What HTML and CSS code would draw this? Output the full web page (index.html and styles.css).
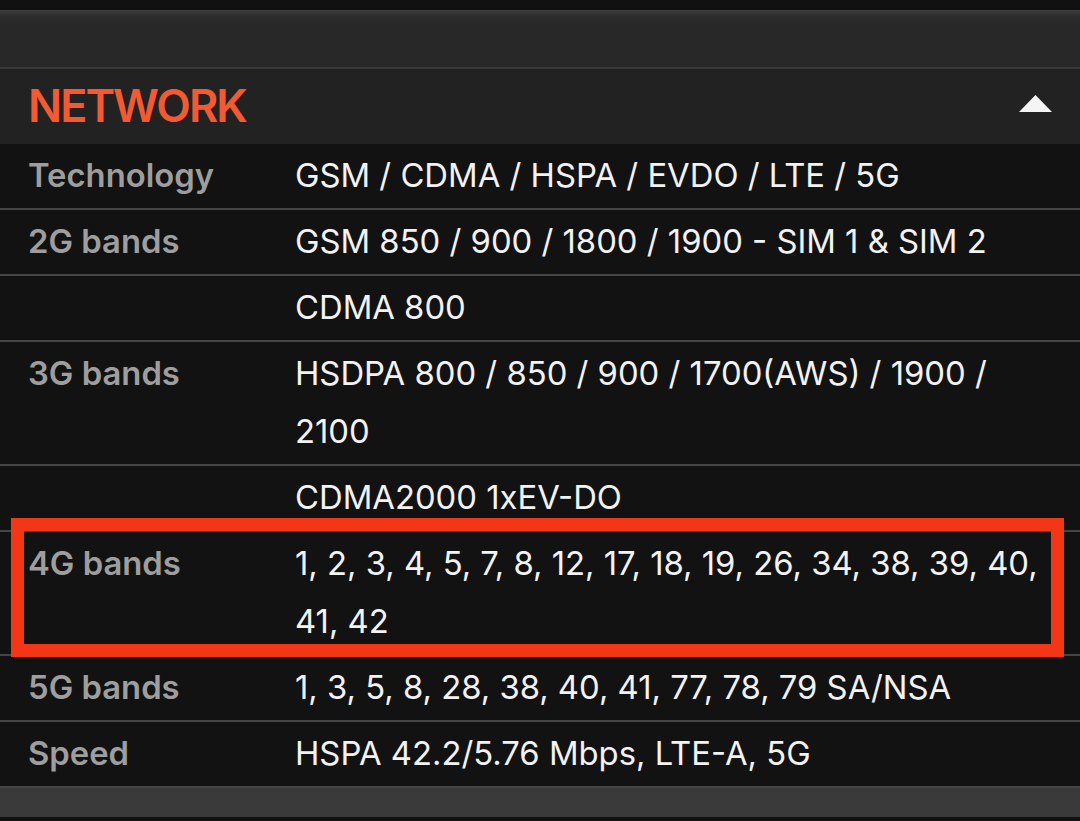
FILE: index.html
```html
<!DOCTYPE html>
<html>
<head>
<meta charset="utf-8">
<link rel="stylesheet" href="styles.css">
</head>
<body>
<div class="page">
  <div class="topband"></div>
  <div class="header">
    <h2 class="title">NETWORK</h2>
    <svg class="caret" width="33" height="17" viewBox="0 0 33 17"><polygon points="16.5,0 33,17 0,17" fill="#f5f5f5"/></svg>
  </div>
  <div class="table">
    <div class="row"><div class="label">Technology</div><div class="value">GSM / CDMA / HSPA / EVDO / LTE / 5G</div></div>
    <div class="row"><div class="label">2G bands</div><div class="value">GSM 850 / 900 / 1800 / 1900 - SIM 1 &amp; SIM 2</div></div>
    <div class="row"><div class="label"></div><div class="value">CDMA 800</div></div>
    <div class="row"><div class="label">3G bands</div><div class="value">HSDPA 800 / 850 / 900 / 1700(AWS) / 1900 / 2100</div></div>
    <div class="row"><div class="label"></div><div class="value">CDMA2000 1xEV-DO</div></div>
    <div class="row highlighted"><div class="label">4G bands</div><div class="value">1, 2, 3, 4, 5, 7, 8, 12, 17, 18, 19, 26, 34, 38, 39, 40, 41, 42</div><div class="mark"></div></div>
    <div class="row"><div class="label">5G bands</div><div class="value">1, 3, 5, 8, 28, 38, 40, 41, 77, 78, 79 SA/NSA</div></div>
    <div class="row"><div class="label">Speed</div><div class="value">HSPA 42.2/5.76 Mbps, LTE-A, 5G</div></div>
  </div>
  <div class="bottomband"></div>
</div>
</body>
</html>
```
FILE: styles.css
```css
html, body {
  margin: 0;
  padding: 0;
  background: #111111;
}
body {
  width: 1080px;
  height: 821px;
  overflow: hidden;
  font-family: Inter, "Noto Sans", sans-serif;
}
.page {
  padding-top: 10px;
}
.topband {
  height: 57px;
  background: linear-gradient(#3e3e3e 0px, #2d2d2d 6px, #282828 14px, #282828 100%);
  border-bottom: 2px solid #3a3a3a;
}
.header {
  height: 75px;
  background: #222222;
  display: flex;
  align-items: center;
  justify-content: space-between;
  padding: 0 28px 0 28px;
}
.title {
  margin: -3px 0 0 0;
  color: #f25a33;
  font-size: 45px;
  font-weight: 600;
  letter-spacing: -2px;
  line-height: 1;
}
.caret {
  display: block;
  margin-top: -6px;
}
.table {
  background: #121212;
}
.row {
  position: relative;
  display: grid;
  grid-template-columns: 267px 1fr;
  padding: 2px 38px 4px 28px;
  border-bottom: 2px solid #454545;
  font-size: 32.8px;
  line-height: 58px;
}
.label {
  color: #9e9e9e;
  font-weight: 600;
}
.value {
  color: #f2f2f2;
  font-weight: 400;
}
.mark {
  position: absolute;
  left: 11px;
  right: 16px;
  top: -14px;
  bottom: -3px;
  border: 13px solid #f33616;
  pointer-events: none;
}
.bottomband {
  height: 29px;
  background: #3a3a3a;
}
```
